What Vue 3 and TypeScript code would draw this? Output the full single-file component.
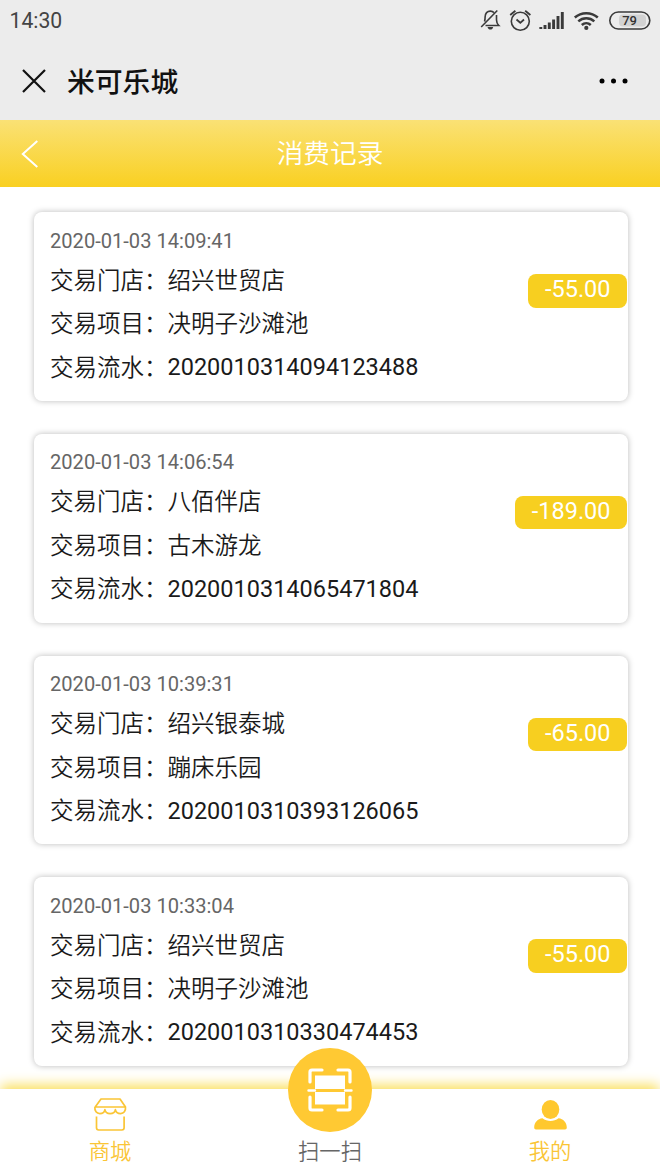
<script setup lang="ts">
interface TradeRecord {
  time: string
  store: string
  project: string
  serial: string
  amount: string
}

const records: TradeRecord[] = [
  { time: '2020-01-03 14:09:41', store: '绍兴世贸店', project: '决明子沙滩池', serial: '2020010314094123488', amount: '-55.00' },
  { time: '2020-01-03 14:06:54', store: '八佰伴店', project: '古木游龙', serial: '2020010314065471804', amount: '-189.00' },
  { time: '2020-01-03 10:39:31', store: '绍兴银泰城', project: '蹦床乐园', serial: '2020010310393126065', amount: '-65.00' },
  { time: '2020-01-03 10:33:04', store: '绍兴世贸店', project: '决明子沙滩池', serial: '2020010310330474453', amount: '-55.00' },
]
</script>

<template>
  <div class="screen">
    <div class="status">
      <span class="clock">14:30</span>
      <svg class="status-icons" width="180" height="32" viewBox="0 0 180 32" fill="none" stroke="#3a3a3a" stroke-width="1.6">
        <path d="M5.500 25.500h13.300c-1.600-1.600-2.300-3.100-2.300-5.500v-5M4.500 21.500c.5-1.200.6-2.500.6-4.500 0-3.700 2.200-5.900 5.200-5.900 1.500 0 2.700.5 3.600 1.500M1.200 27 17.300 10.500" />
        <path d="M7.500 27h5.700c-.5 1.900-1.500 2.500-2.800 2.500s-2.400-.6-2.900-2.500z" fill="#3a3a3a" stroke="none" />
        <circle cx="40.300" cy="21.200" r="9" />
        <path d="m36.500 19.500 3.800 3.300 3.700-3.300M30.200 15l5.200-4.300M45.200 10.700l5.200 4.300" stroke-width="1.800" />
        <path d="M60.800 29v-2M65 29v-4M69.300 29v-6.500M73.600 29v-9.500M78 29V16M82.300 29V12" stroke-width="2.900" />
        <path d="M94.800 17.500c6.400-5.800 16.600-5.800 23 0M98.300 21.300c4.600-4.200 11.400-4.200 16 0M101.800 25c2.600-2.300 6.400-2.300 9 0" stroke-width="2.500" />
        <circle cx="106.300" cy="27.900" r="2.100" fill="#3a3a3a" stroke="none" />
        <rect x="139" y="14.500" width="27" height="12" rx="4" fill="#d2d2d2" stroke="none" />
        <rect x="129.800" y="12" width="40" height="17" rx="8.500" />
        <text x="149.600" y="25.200" text-anchor="middle" class="battery">79</text>
      </svg>
    </div>
    <div class="appbar">
      <svg class="close" width="24" height="24" viewBox="0 0 24 24" fill="none" stroke="#111" stroke-width="2.200"><path d="m1 1 22 22M23 1 1 23" /></svg>
      <span class="app-title">米可乐城</span>
      <svg class="more" width="30" height="6" viewBox="0 0 30 6" fill="#000"><circle cx="3" cy="3" r="2.500" /><circle cx="14.500" cy="3" r="2.500" /><circle cx="26" cy="3" r="2.500" /></svg>
    </div>
    <header class="header">
      <svg class="back" width="18" height="28" viewBox="0 0 18 28" fill="none" stroke="#fff" stroke-width="2"><path d="M16.300 1 1.800 14l14.500 13" /></svg>
      <h1>消费记录</h1>
    </header>

    <main class="list">
      <article v-for="r in records" :key="r.serial" class="card">
        <div class="time">{{ r.time }}</div>
        <div class="row">交易门店：{{ r.store }}</div>
        <div class="row">交易项目：{{ r.project }}</div>
        <div class="row">交易流水：<span class="serial">{{ r.serial }}</span></div>
        <span class="amount">{{ r.amount }}</span>
      </article>
    </main>

    <nav class="tabs">
      <div class="tab gold">
        <svg width="36" height="34" viewBox="0 0 36 34" fill="none" stroke="#fac536" stroke-width="1.700" stroke-linejoin="round">
          <path d="M9 1h19l5.500 8H3.200z M2.900 9c-.5 4 1.800 6.600 4.900 6.600 2.700 0 4.700-1.500 5.100-4 .5 2.500 2.400 4 5.200 4s4.900-1.500 5.300-4c.5 2.500 2.500 4 5.200 4 3.200 0 5.300-2.600 4.900-6.600M4.500 18.500v11.300c0 1.500.7 2.200 2.200 2.200h23.200c1.500 0 2.200-.7 2.200-2.200V18.500" />
        </svg>
        <span>商城</span>
      </div>
      <div class="tab">
        <div class="scan">
          <svg width="46" height="44" viewBox="0 0 46 44" fill="none" stroke="#fff" stroke-width="3.200" stroke-linecap="round" stroke-linejoin="round">
            <path d="M3 14V4q0-2 2-2h10M31 2h10q2 0 2 2v10M3 29v11q0 2 2 2h10M31 42h10q2 0 2-2V29" />
            <path d="M8 7.500h30v13.500H8zM8 24h30v12.500H8z" fill="#fff" stroke="none" />
            <path d="M1.500 22.500H8M38 22.500h6.500" stroke-width="2.400" />
          </svg>
        </div>
        <span>扫一扫</span>
      </div>
      <div class="tab gold">
        <svg width="36" height="34" viewBox="0 0 36 34" fill="#ffc82e">
          <ellipse cx="18.500" cy="11.500" rx="8.800" ry="9.600" />
          <path d="M10.500 20.300c4.600 3.500 11.400 3.500 16 0 4.800.4 8.300 4.200 8.300 9.300 0 1.200-.6 2-1.800 2H4c-1.200 0-1.800-.8-1.800-2 0-5.100 3.500-8.900 8.300-9.300z" />
        </svg>
        <span>我的</span>
      </div>
    </nav>
  </div>
</template>

<style>
body {
  margin: 0;
  background: #fff;
}
</style>

<style scoped>
.screen {
  width: 660px;
  height: 1173px;
  display: flex;
  flex-direction: column;
  overflow: hidden;
  background: #fff;
  font-family: Roboto, "Noto Sans CJK SC", sans-serif;
  color: #1a1a1a;
}
.status {
  height: 42px;
  flex: none;
  display: flex;
  justify-content: space-between;
  padding-left: 9.500px;
  background: #ececec;
}
.clock {
  font-size: 21.200px;
  line-height: 42px;
  color: #444;
}
.status-icons {
  display: block;
}
.battery {
  font: 500 13px Roboto, sans-serif;
  fill: #333;
  stroke: none;
}
.appbar {
  height: 78px;
  flex: none;
  display: flex;
  align-items: center;
  padding: 0 31px 0 21.500px;
  box-sizing: border-box;
  background: #ececec;
}
.app-title {
  margin-left: 21.500px;
  padding-top: 3px;
  font-size: 27.800px;
  font-weight: 500;
  line-height: 78px;
  color: #111;
}
.more {
  margin-left: auto;
}
.header {
  height: 67px;
  flex: none;
  display: grid;
  grid-template-columns: 60px 1fr 60px;
  align-items: center;
  background: linear-gradient(#fae175, #f9d021);
}
.back {
  margin-left: 21px;
}
h1 {
  margin: 0;
  text-align: center;
  font-size: 26.700px;
  font-weight: 350;
  line-height: 66px;
  color: #fff;
}
.list {
  flex: 1;
  min-height: 0;
  padding: 25px 32.500px 0 33.500px;
  display: flex;
  flex-direction: column;
  gap: 33px;
}
.card {
  position: relative;
  flex: none;
  height: 188.800px;
  box-sizing: border-box;
  padding: 11.500px 16.500px 0;
  border-radius: 8px;
  background: #fff;
  box-shadow: 0 0 6px rgba(0, 0, 0, 0.27);
}
.time {
  font-size: 20.100px;
  line-height: 34px;
  margin-bottom: 2px;
  color: #666;
}
.row {
  font-size: 23.500px;
  font-weight: 350;
  line-height: 43.600px;
  white-space: nowrap;
}
.serial {
  position: relative;
  top: -0.600px;
  font-weight: 400;
}
.amount {
  position: absolute;
  right: 0.500px;
  top: 62px;
  height: 33.500px;
  padding: 0 16.500px;
  border-radius: 8px;
  background: #f7cf20;
  color: #fff;
  font-size: 23.500px;
  line-height: 31.500px;
}
.tabs {
  position: relative;
  flex: none;
  height: 84px;
  display: grid;
  grid-template: 84px / repeat(3, 220px);
  background: #fff;
  box-shadow: 0 -5px 12px -1px #fadf5c;
}
.tab {
  display: flex;
  flex-direction: column;
  align-items: center;
  justify-content: flex-end;
  min-height: 0;
  box-sizing: border-box;
  font-size: 21.300px;
  line-height: 30px;
  color: #666;
  padding-bottom: 6.500px;
  font-weight: 350;
}
.tab svg {
  display: block;
}
.gold {
  color: #fac536;
}
.gold svg {
  margin-bottom: 5px;
}
.scan {
  width: 84px;
  height: 84px;
  flex: none;
  margin-bottom: 5px;
  display: flex;
  align-items: center;
  justify-content: center;
  border-radius: 50%;
  background: #ffc933;
}
</style>
